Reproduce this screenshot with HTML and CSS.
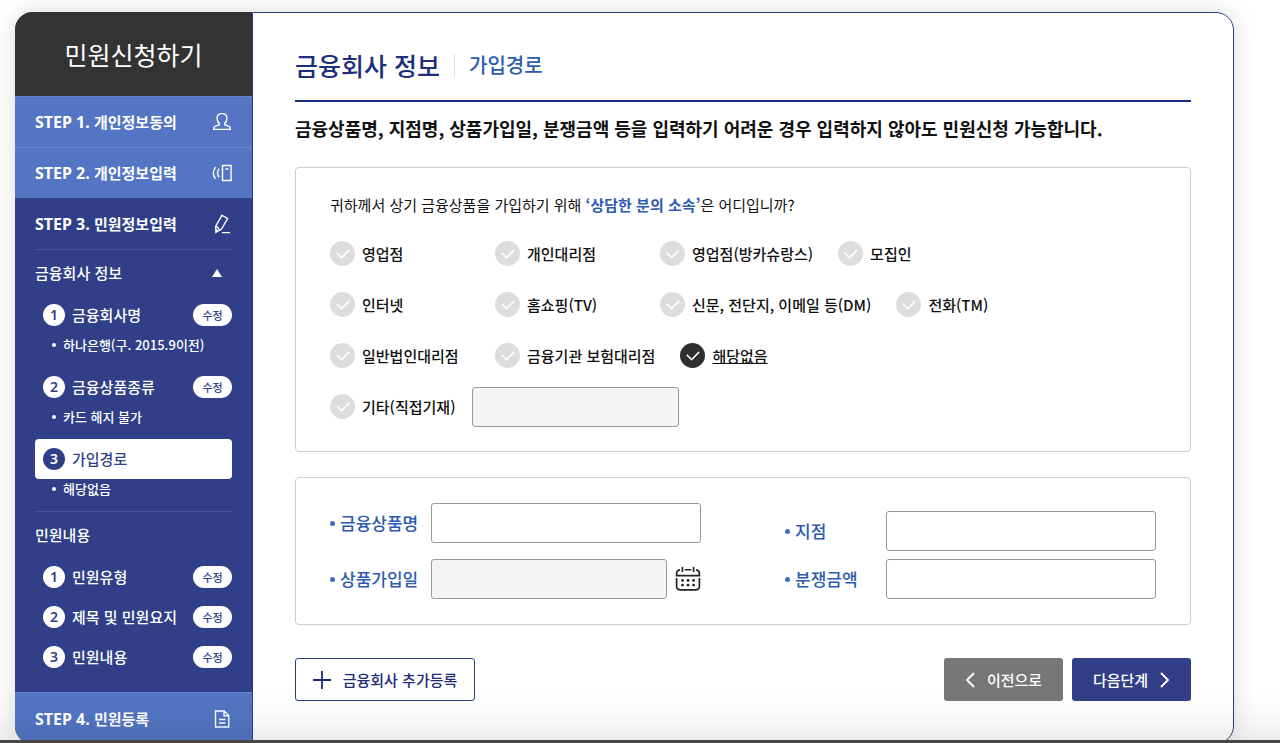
FILE: index.html
```html
<!DOCTYPE html>
<html lang="ko">
<head>
  <meta charset="UTF-8">
  <meta name="viewport" content="width=device-width, initial-scale=1.0">
  <title>민원신청하기</title>
  <link rel="stylesheet" href="styles.css">
</head>
<body>
  <div class="page">
    <div class="card">
      <aside class="sidebar">
        <h1>민원신청하기</h1>

        <a href="#" class="step">
          <span><b>STEP 1.</b> 개인정보동의</span>
          <svg width="20" height="20" viewBox="0 0 20 20"><path d="M7.3 11.4C5.7 10.2 5.1 8.4 5.1 6.3 5.1 3.4 7.1 1.6 10 1.6s4.9 1.8 4.9 4.7c0 2.1-.6 3.9-2.2 5.1v1.3l4.3 1.6c.9.4 1.3.9 1.3 1.8v1.3H1.7v-1.3c0-.9.4-1.4 1.3-1.8l4.3-1.6z"/></svg>
        </a>
        <a href="#" class="step">
          <span><b>STEP 2.</b> 개인정보입력</span>
          <svg width="20" height="20" viewBox="0 0 20 20"><path d="M10.5 2.5h8.6v15h-8.6zM13.4 6h3.1M3.6 4.2C.6 7 .6 13 3.6 15.8M7.2 5.8c-2.2 2-2.2 6.4 0 8.4"/></svg>
        </a>
        <a href="#" class="step current">
          <span><b>STEP 3.</b> 민원정보입력</span>
          <svg width="20" height="20" viewBox="0 0 20 20"><path d="M10 1.3l5.6 3.2-6.1 10.6-5.6 3.2-.2-6.2zM3.8 11.6l2.2 2 .5 1.6 2.6.2M3.9 15.6l2 1.6M10 18.6h8"/></svg>
        </a>

        <div class="menu">
          <section class="menu-group">
            <h2>금융회사 정보 <span class="arrow"></span></h2>
            <div class="item">
              <span class="num">1</span><span class="name">금융회사명</span>
              <button type="button" class="edit">수정</button>
            </div>
            <p class="value">하나은행(구. 2015.9이전)</p>
            <div class="item">
              <span class="num">2</span><span class="name">금융상품종류</span>
              <button type="button" class="edit">수정</button>
            </div>
            <p class="value">카드 해지 불가</p>
            <div class="item active">
              <span class="num">3</span><span class="name">가입경로</span>
            </div>
            <p class="value">해당없음</p>
          </section>
          <section class="menu-group">
            <h2>민원내용</h2>
            <div class="item">
              <span class="num">1</span><span class="name">민원유형</span>
              <button type="button" class="edit">수정</button>
            </div>
            <div class="item">
              <span class="num">2</span><span class="name">제목 및 민원요지</span>
              <button type="button" class="edit">수정</button>
            </div>
            <div class="item">
              <span class="num">3</span><span class="name">민원내용</span>
              <button type="button" class="edit">수정</button>
            </div>
          </section>
        </div>

        <a href="#" class="step last">
          <span><b>STEP 4.</b> 민원등록</span>
          <svg width="20" height="20" viewBox="0 0 20 20"><path d="M3.5 2h8.7l4.6 4.6V18H3.5zM12 2v4.8h4.8M7 10.5h6.4M7 14h6.4"/></svg>
        </a>
      </aside>

      <main>
        <header class="title">
          <h2>금융회사 정보</h2>
          <span class="sub">가입경로</span>
        </header>
        <p class="notice">금융상품명, 지점명, 상품가입일, 분쟁금액 등을 입력하기 어려운 경우 입력하지 않아도 민원신청 가능합니다.</p>

        <form>
          <div class="box route">
            <p class="question">귀하께서 상기 금융상품을 가입하기 위해 <strong>‘상담한 분의 소속’</strong>은 어디입니까?</p>
            <div class="radio-row">
              <label><input type="radio" name="route"><span>영업점</span></label>
              <label><input type="radio" name="route"><span>개인대리점</span></label>
              <label><input type="radio" name="route"><span>영업점(방카슈랑스)</span></label>
              <label><input type="radio" name="route"><span>모집인</span></label>
            </div>
            <div class="radio-row">
              <label><input type="radio" name="route"><span>인터넷</span></label>
              <label><input type="radio" name="route"><span>홈쇼핑(TV)</span></label>
              <label><input type="radio" name="route"><span>신문, 전단지, 이메일 등(DM)</span></label>
              <label><input type="radio" name="route"><span>전화(TM)</span></label>
            </div>
            <div class="radio-row">
              <label><input type="radio" name="route"><span>일반법인대리점</span></label>
              <label><input type="radio" name="route"><span>금융기관 보험대리점</span></label>
              <label><input type="radio" name="route" checked><span>해당없음</span></label>
            </div>
            <div class="radio-row etc">
              <label><input type="radio" name="route"><span>기타(직접기재)</span></label>
              <input type="text" class="text" aria-label="기타" disabled>
            </div>
          </div>

          <div class="box info">
            <div class="column">
              <div class="field">
                <label for="product">금융상품명</label>
                <input type="text" class="text" id="product">
              </div>
              <div class="field">
                <label for="joinDate">상품가입일</label>
                <div class="date">
                  <input type="text" class="text" id="joinDate" readonly>
                  <button type="button" class="calendar" aria-label="달력">
                    <svg width="26" height="26" viewBox="0 0 28 28"><path d="M5.5 4.2C3 4.6 1.7 6 1.7 8.4v1.9h24.6V8.4c0-2.4-1.3-3.8-3.8-4.2M10.5 4h7M8 1v5.5M20 1v5.5M1.7 13v8.6c0 2.8 1.6 4.2 4.2 4.2h16.2c2.6 0 4.2-1.4 4.2-4.2V13"/><path class="dots" d="M8 15.5h.1M14 15.5h.1M20 15.5h.1M8 20.5h.1M14 20.5h.1M20 20.5h.1"/></svg>
                  </button>
                </div>
              </div>
            </div>
            <div class="column right">
              <div class="field">
                <label for="branch">지점</label>
                <input type="text" class="text" id="branch">
              </div>
              <div class="field">
                <label for="amount">분쟁금액</label>
                <input type="text" class="text" id="amount">
              </div>
            </div>
          </div>

          <div class="buttons">
            <button type="button" class="btn add">
              <svg width="18" height="18" viewBox="0 0 18 18"><path d="M9 0v18M0 9h18"/></svg>
              금융회사 추가등록
            </button>
            <button type="button" class="btn prev">
              <svg width="10" height="16" viewBox="0 0 10 16"><path d="M9 1L2 8l7 7"/></svg>
              이전으로
            </button>
            <button type="submit" class="btn next">
              다음단계
              <svg width="10" height="16" viewBox="0 0 10 16"><path d="M1 1l7 7-7 7"/></svg>
            </button>
          </div>
        </form>
      </main>
    </div>
  </div>
  <div class="bottom-bar"></div>
</body>
</html>
```
FILE: styles.css
```css
* {
  box-sizing: border-box;
}

body {
  margin: 0;
  background-color: #fff;
  color: #111;
  font-family: "Noto Sans CJK KR", "Noto Sans", sans-serif;
  font-size: 15px;
  font-weight: 500;
  line-height: 20px;
}

h1,
h2,
p {
  margin: 0;
}

button,
input {
  font-family: inherit;
  font-size: 15px;
  font-weight: 500;
}

button {
  cursor: pointer;
}

svg {
  display: block;
  fill: none;
  stroke: currentColor;
  stroke-width: 1.4;
}

.page {
  height: 100vh;
  padding: 12px 46px 0 15px;
  overflow-y: auto;
  scrollbar-width: none;
}

.card {
  display: flex;
  border-radius: 18px;
  box-shadow: 0 0 24px rgba(0, 0, 0, 0.14);
}

/* sidebar */
.sidebar {
  display: flex;
  flex-direction: column;
  width: 237px;
  flex-shrink: 0;
  border-radius: 18px 0 0 18px;
  background-color: #303f87;
  color: #fff;
  overflow: hidden;
}

.sidebar h1 {
  height: 84px;
  background-color: #333;
  font-size: 25px;
  font-weight: 400;
  line-height: 84px;
  text-align: center;
}

.step {
  display: flex;
  align-items: center;
  justify-content: space-between;
  height: 51px;
  padding: 0 20px;
  border-top: 1px solid #6484cb;
  background-color: #5375c3;
  color: #fff;
  text-decoration: none;
}

.step span {
  font-weight: 700;
}

.step b {
  font-family: "Noto Sans", sans-serif;
  font-size: 16px;
  font-weight: 700;
}

.step.current {
  border-top-color: #303f87;
  background-color: #303f87;
}

.step.last {
  flex: 1;
}

.menu {
  padding: 0 20px 15px;
}

.menu-group {
  border-top: 1px solid #45539a;
}

.menu-group h2 {
  display: flex;
  align-items: center;
  justify-content: space-between;
  height: 45px;
  padding-right: 10px;
  font-size: 15px;
  font-weight: 500;
}

.arrow {
  border: 5px solid transparent;
  border-top: 0;
  border-bottom: 8px solid #fff;
}

.item {
  display: flex;
  align-items: center;
  height: 40px;
  padding-left: 8px;
  border-radius: 4px;
}

.item .num {
  width: 22px;
  height: 22px;
  margin-right: 7px;
  border-radius: 50%;
  background-color: #fff;
  color: #303f87;
  font-family: "Noto Sans", sans-serif;
  font-size: 14px;
  font-weight: 600;
  line-height: 22px;
  text-align: center;
}

.item.active {
  background-color: #fff;
  color: #303f87;
}

.item.active .num {
  background-color: #303f87;
  color: #fff;
}

.edit {
  width: 39px;
  height: 22px;
  margin-left: auto;
  padding: 0;
  border: none;
  border-radius: 11px;
  background-color: #fff;
  color: #303f87;
  font-size: 11px;
}

.value {
  display: flex;
  align-items: center;
  margin-bottom: 12px;
  padding-left: 17px;
  font-size: 13px;
}

.value::before {
  content: "";
  width: 4px;
  height: 4px;
  margin-right: 7px;
  border-radius: 50%;
  background-color: #fff;
}

/* content */
main {
  flex: 1;
  padding: 28px 42px 42px;
  border: 1px solid #2c4088;
  border-radius: 0 18px 18px 0;
  background-color: #fff;
}

.title {
  display: flex;
  align-items: center;
  height: 61px;
  padding-bottom: 11px;
  border-bottom: 2px solid #1d2c78;
}

.title h2 {
  color: #1d2f7c;
  font-size: 25px;
  font-weight: 500;
  line-height: 36px;
}

.title .sub {
  display: flex;
  align-items: center;
  color: #2c5bb0;
  font-size: 20px;
}

.title .sub::before {
  content: "";
  width: 1px;
  height: 23px;
  margin: 0 14px;
  background-color: #ddd;
}

.notice {
  margin: 12px 0 25px;
  font-size: 18px;
  font-weight: 700;
  line-height: 28px;
}

.box {
  padding: 25px 34px;
  border: 1px solid #ccc;
  border-radius: 4px;
}

.route {
  padding-bottom: 19px;
}

.question {
  margin-bottom: 11px;
  font-weight: 400;
  line-height: 24px;
}

.question strong {
  color: #2c5bb0;
  font-weight: 700;
}

.radio-row {
  display: flex;
  align-items: center;
  height: 51px;
}

.radio-row label {
  display: flex;
  align-items: center;
  gap: 7px;
  min-width: 140px;
  margin-right: 25px;
}

.radio-row input[type="radio"] {
  display: flex;
  align-items: center;
  justify-content: center;
  width: 25px;
  height: 25px;
  margin: 0;
  border-radius: 50%;
  background-color: #ddd;
  appearance: none;
}

.radio-row input[type="radio"]::before {
  content: "";
  width: 10px;
  height: 6px;
  margin-bottom: 3px;
  border: solid #fff;
  border-width: 0 0 2px 2px;
  border-radius: 1px;
  transform: rotate(-45deg);
}

.radio-row input[type="radio"]:checked {
  background-color: #2e2e2e;
}

.radio-row input[type="radio"]:checked + span {
  text-decoration: underline;
}

.radio-row.etc label {
  min-width: 0;
  margin-right: 17px;
}

.radio-row.etc .text {
  width: 207px;
}

.text {
  width: 270px;
  height: 40px;
  padding: 0 10px;
  border: 1px solid #999;
  border-radius: 3px;
  background-color: #fff;
}

.text:disabled,
.text:read-only {
  background-color: #f4f4f4;
}

.info {
  display: flex;
  justify-content: space-between;
  margin-top: 25px;
}

.column {
  display: flex;
  flex-direction: column;
  justify-content: flex-end;
  gap: 16px;
}

.column.right {
  gap: 8px;
}

.field {
  display: flex;
  align-items: center;
}

.field label {
  display: flex;
  align-items: center;
  width: 101px;
  color: #2c5bb0;
  font-size: 17px;
}

.field label::before {
  content: "";
  width: 5px;
  height: 5px;
  margin-right: 5px;
  border-radius: 50%;
  background-color: #3f6bbd;
}

.date {
  display: flex;
  align-items: center;
  gap: 8px;
  width: 270px;
}

.date .text {
  flex: 1;
  min-width: 0;
}

.calendar {
  padding: 0;
  border: none;
  background: none;
  color: #222;
}

.calendar svg {
  stroke-width: 1.8;
}

.calendar .dots {
  stroke-width: 3;
  stroke-linecap: round;
}

.buttons {
  display: flex;
  gap: 9px;
  margin-top: 33px;
}

.btn {
  display: flex;
  align-items: center;
  justify-content: center;
  gap: 12px;
  width: 119px;
  height: 43px;
  padding: 0;
  border: none;
  border-radius: 3px;
  background-color: #777;
  color: #fff;
}

.btn svg {
  stroke-width: 1.8;
}

.btn.add {
  width: 180px;
  margin-right: auto;
  border: 1px solid #2c4088;
  background-color: #fff;
  color: #1d2c78;
}

.btn.next {
  background-color: #303f87;
}

/* bottom edge of the window */
.bottom-bar {
  position: fixed;
  right: 0;
  bottom: 0;
  left: 0;
  height: 53px;
  border-bottom: 3px solid #484646;
  background-image: linear-gradient(transparent, rgba(0, 0, 0, 0.02) 50%, rgba(0, 0, 0, 0.07));
  pointer-events: none;
}
```
